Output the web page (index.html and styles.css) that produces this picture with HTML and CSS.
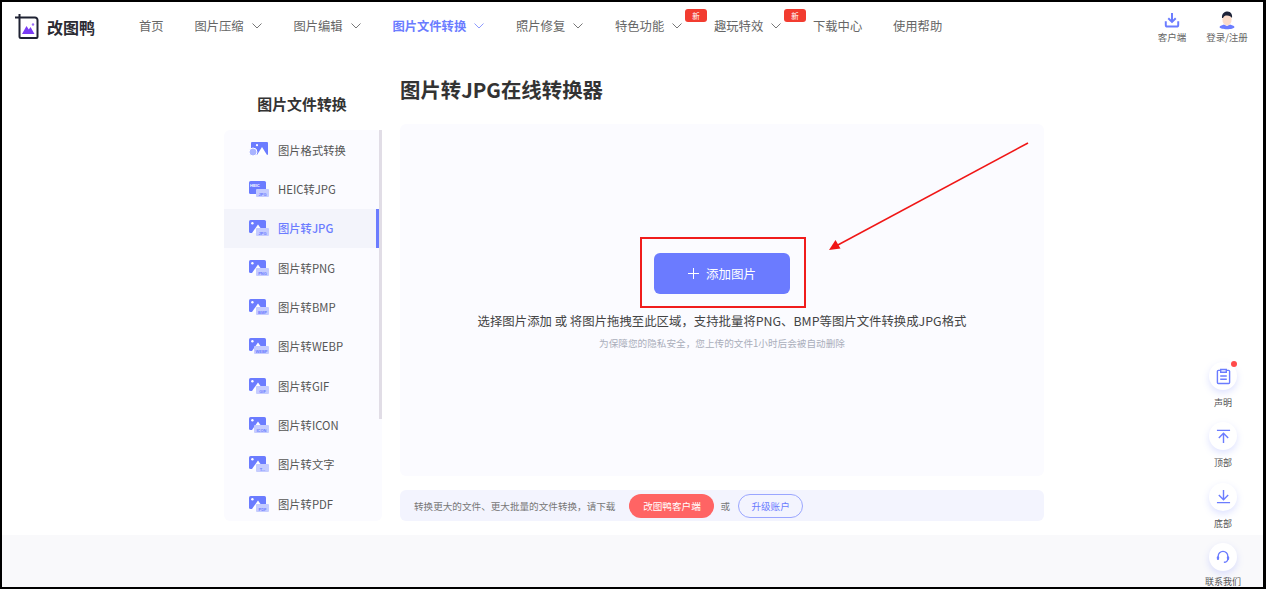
FILE: index.html
```html
<!DOCTYPE html>
<html lang="zh-CN">
<head>
<meta charset="utf-8">
<title>图片转JPG在线转换器</title>
<link rel="stylesheet" href="styles.css">
</head>
<body>
<svg class="defs" width="0" height="0" aria-hidden="true">
  <symbol id="pic" viewBox="0 0 20 16">
    <rect x="0" y="0" width="17" height="13" rx="1.6" fill="#6b7cff"/>
    <circle cx="3.4" cy="3.2" r="1.2" fill="#fff"/>
    <path d="M3 13 L9 4.5 L15 13Z" fill="#fff"/>
  </symbol>
</svg>
<div class="frame">
  <header class="top">
    <a class="logo">
      <svg class="logo-icon" viewBox="0 0 26 26" width="26" height="26">
        <path d="M1 3.5H21a2.5 2.5 0 0 1 2.500 2.500V23a1 1 0 0 1-1 1H7a1.500 1.500 0 0 1-1.500-1.500V0" fill="none" stroke="#1f2233" stroke-width="2"/>
        <path d="M8 20 L12.500 12 L14.800 15.500 L16.500 13 L20.500 20Z" fill="#7a3cf5"/>
        <circle cx="19" cy="10.500" r="1.200" fill="#9a6cf8"/>
      </svg>
      <span class="logo-text">改图鸭</span>
    </a>
    <nav class="nav">
      <a class="nav-item">首页</a>
      <a class="nav-item has-sub">图片压缩<svg class="chev" viewBox="0 0 10 6"><path d="M.5.5 5 5 9.500.5"/></svg></a>
      <a class="nav-item has-sub">图片编辑<svg class="chev" viewBox="0 0 10 6"><path d="M.5.5 5 5 9.500.5"/></svg></a>
      <a class="nav-item has-sub active">图片文件转换<svg class="chev" viewBox="0 0 10 6"><path d="M.5.5 5 5 9.500.5"/></svg></a>
      <a class="nav-item has-sub">照片修复<svg class="chev" viewBox="0 0 10 6"><path d="M.5.5 5 5 9.500.5"/></svg></a>
      <a class="nav-item has-sub">特色功能<svg class="chev" viewBox="0 0 10 6"><path d="M.5.5 5 5 9.500.5"/></svg><span class="new">新</span></a>
      <a class="nav-item has-sub">趣玩特效<svg class="chev" viewBox="0 0 10 6"><path d="M.5.5 5 5 9.500.5"/></svg><span class="new">新</span></a>
      <a class="nav-item">下载中心</a>
      <a class="nav-item">使用帮助</a>
    </nav>
    <div class="top-right">
      <a class="top-link">
        <svg viewBox="0 0 18 18" width="16" height="16"><path d="M9 1V11M4.800 7 9 11.200 13.200 7" fill="none" stroke="#6b7cff" stroke-width="2.200"/><path d="M2 10.500V14.500a1.800 1.800 0 0 0 1.800 1.800H14.200a1.800 1.800 0 0 0 1.800-1.800V10.500" fill="none" stroke="#6b7cff" stroke-width="2.200"/></svg>
        <span>客户端</span>
      </a>
      <a class="top-link login">
        <svg viewBox="0 0 20 20" width="20" height="20"><path d="M2.500 16C3 19 17 19 17.500 16 17 14.500 14.500 14 13 13.500L10 15 7 13.500C5.500 14 3 14.500 2.500 16Z" fill="#6b7cff"/><ellipse cx="10" cy="8.500" rx="4.600" ry="6" fill="#fcdcca"/><path d="M5 7C4.500 2 8 .5 10.500.5 14 .5 15.500 3.500 15 7 14 5.500 12.500 4.500 10 4.500 8 4.500 7 5 6 7Z" fill="#1d2338"/></svg>
        <span>登录/注册</span>
      </a>
    </div>
  </header>

  <div class="content">
    <aside class="side">
      <h2 class="side-title">图片文件转换</h2>
      <ul class="side-list">
        <li class="side-item">
          <svg class="ic" viewBox="0 0 20 16"><rect x="2" y="0" width="17" height="13" rx="1" fill="#6b7cff"/><circle cx="8" cy="3.200" r="1.100" fill="#fff"/><path d="M8 13 L13 5 L18 13Z" fill="#fff"/><circle cx="4" cy="10" r="4" fill="#a9b3ff" stroke="#fff"/></svg>
          <span>图片格式转换</span>
        </li>
        <li class="side-item">
          <svg class="ic" viewBox="0 0 20 16"><rect x="0" y="0" width="17" height="13" rx="1.600" fill="#6b7cff"/><text class="ic-head" x="1" y="6">HEIC</text><rect x="7" y="8" width="13" height="8" rx="1" fill="#c5ccff"/><text class="ic-t" x="13.500" y="14.500">JPG</text></svg>
          <span>HEIC转JPG</span>
        </li>
        <li class="side-item on">
          <svg class="ic" viewBox="0 0 20 16"><use href="#pic"/><rect x="7" y="8" width="13" height="8" rx="1" fill="#c5ccff"/><text class="ic-t" x="13.500" y="14.500">JPG</text></svg>
          <span>图片转JPG</span>
        </li>
        <li class="side-item">
          <svg class="ic" viewBox="0 0 20 16"><use href="#pic"/><rect x="7" y="8" width="13" height="8" rx="1" fill="#c5ccff"/><text class="ic-t" x="13.500" y="14.500">PNG</text></svg>
          <span>图片转PNG</span>
        </li>
        <li class="side-item">
          <svg class="ic" viewBox="0 0 20 16"><use href="#pic"/><rect x="7" y="8" width="13" height="8" rx="1" fill="#c5ccff"/><text class="ic-t" x="13.500" y="14.500">BMP</text></svg>
          <span>图片转BMP</span>
        </li>
        <li class="side-item">
          <svg class="ic" viewBox="0 0 20 16"><use href="#pic"/><rect x="5" y="8" width="15" height="8" rx="1" fill="#c5ccff"/><text class="ic-t" x="12.500" y="14.500">WEBP</text></svg>
          <span>图片转WEBP</span>
        </li>
        <li class="side-item">
          <svg class="ic" viewBox="0 0 20 16"><use href="#pic"/><rect x="7" y="8" width="13" height="8" rx="1" fill="#c5ccff"/><text class="ic-t" x="13.500" y="14.500">GIF</text></svg>
          <span>图片转GIF</span>
        </li>
        <li class="side-item">
          <svg class="ic" viewBox="0 0 20 16"><use href="#pic"/><rect x="5" y="8" width="15" height="8" rx="1" fill="#c5ccff"/><text class="ic-t" x="12.500" y="14.500">ICON</text></svg>
          <span>图片转ICON</span>
        </li>
        <li class="side-item">
          <svg class="ic" viewBox="0 0 20 16"><use href="#pic"/><rect x="7" y="8" width="13" height="8" rx="1" fill="#c5ccff"/><text class="ic-t" x="13.500" y="14.500">T...</text></svg>
          <span>图片转文字</span>
        </li>
        <li class="side-item">
          <svg class="ic" viewBox="0 0 20 16"><use href="#pic"/><rect x="7" y="8" width="13" height="8" rx="1" fill="#c5ccff"/><text class="ic-t" x="13.500" y="14.500">PDF</text></svg>
          <span>图片转PDF</span>
        </li>
      </ul>
      <div class="side-scroll"></div>
    </aside>

    <main class="main">
      <h1 class="title">图片转JPG在线转换器</h1>
      <section class="upload">
        <button class="add"><svg class="plus" viewBox="0 0 11 11"><path d="M5.500 0V11M0 5.500H11"/></svg>添加图片</button>
        <p class="hint">选择图片添加 或 将图片拖拽至此区域&#xFF0C;支持批量将PNG、BMP等图片文件转换成JPG格式</p>
        <p class="sub">为保障您的隐私安全&#xFF0C;您上传的文件1小时后会被自动删除</p>
        <div class="mark"></div>
        <svg class="arrow" viewBox="0 0 204 110" width="204" height="110"><path d="M202 1 10 104" stroke="#f01616" stroke-width="1.500" fill="none"/><path d="M3 108 9.500 98 14.500 106.500Z" fill="#f01616"/></svg>
      </section>
      <div class="promo">
        <span>转换更大的文件、更大批量的文件转换&#xFF0C;请下载</span>
        <a class="btn-client">改图鸭客户端</a>
        <span class="or">或</span>
        <a class="btn-up">升级账户</a>
      </div>
    </main>
  </div>
  <footer class="foot"></footer>

  <div class="float">
    <a class="f-item">
      <i class="f-circle dot"><svg viewBox="0 0 16 18" width="15" height="17"><path d="M5 2.500H2.500a1 1 0 0 0-1 1V15.500a1 1 0 0 0 1 1H13.500a1 1 0 0 0 1-1V3.500a1 1 0 0 0-1-1H11M5 1.500H11V4.500H5ZM4.500 8.500H11.500M4.500 12H11.500" fill="none" stroke="#6b7cff" stroke-width="1.500"/></svg></i>
      <span>声明</span>
    </a>
    <a class="f-item">
      <i class="f-circle"><svg viewBox="0 0 16 16" width="15" height="15"><path d="M1 1.500H15M8 15V5M3 9.500 8 4.500 13 9.500" fill="none" stroke="#6b7cff" stroke-width="1.500"/></svg></i>
      <span>顶部</span>
    </a>
    <a class="f-item">
      <i class="f-circle"><svg viewBox="0 0 16 16" width="15" height="15"><path d="M1 14.500H15M8 1V11M3 6.500 8 11.500 13 6.500" fill="none" stroke="#6b7cff" stroke-width="1.500"/></svg></i>
      <span>底部</span>
    </a>
    <a class="f-item">
      <i class="f-circle"><svg viewBox="0 0 16 16" width="14" height="14"><path d="M2.500 10V7a5.500 5.500 0 0 1 11 0V10M13.500 10C13.500 12.500 11.500 14 9 14" fill="none" stroke="#6b7cff" stroke-width="1.500"/><rect x="1" y="7" width="2.500" height="4.500" rx="1.200" fill="#6b7cff"/><rect x="12.500" y="7" width="2.500" height="4.500" rx="1.200" fill="#6b7cff"/></svg></i>
      <span>联系我们</span>
    </a>
  </div>
</div>
</body>
</html>
```
FILE: styles.css
```css
* { box-sizing: border-box; }
html, body { margin: 0; padding: 0; height: 100%; overflow: hidden; background: #000; }
body { font-family: "Noto Sans CJK SC", "Noto Sans", sans-serif; color: #333; }
.defs { position: absolute; }
a { color: inherit; text-decoration: none; }
ul { list-style: none; margin: 0; padding: 0; }
p, h1, h2 { margin: 0; }

.frame {
  position: relative;
  width: 1266px;
  height: 589px;
  border: solid #000;
  border-width: 2px 3px 2px 2px;
  background: #fff;
  display: flex;
  flex-direction: column;
  overflow: hidden;
}

/* header */
.top { height: 50px; display: flex; align-items: center; flex: none; }
.logo { display: flex; align-items: center; margin-left: 12px; width: 125px; }
.logo-icon { flex: none; }
.logo-text { margin-left: 7px; font-size: 16px; font-weight: 700; letter-spacing: 0; color: #2b2b33; }
.nav { display: flex; gap: 30.800px; font-size: 12.300px; color: #666; margin-top: -2px; }
.nav-item { position: relative; display: flex; align-items: center; height: 20px; white-space: nowrap; }
.nav-item.active { color: #6b7cff; font-weight: 700; }
.chev { width: 10px; height: 6px; margin-left: 8px; margin-right: 1px; fill: none; stroke: #777; stroke-width: 1; }
.active .chev { stroke: #8d9aff; }
.new {
  position: absolute;
  left: 70px;
  top: -7px;
  width: 22px;
  height: 13px;
  border-radius: 3px;
  background: #f23c30;
  color: #fff;
  font-size: 7.500px;
  line-height: 13px;
  text-align: center;
}
.top-right { margin-left: auto; display: flex; margin-right: 8px; }
.top-link { display: flex; flex-direction: column; align-items: center; justify-content: flex-end; height: 32px; width: 50px; font-size: 9.500px; color: #666; line-height: 12px; }
.top-link svg { margin-bottom: 3px; flex: none; }
.top-link.login { width: 56px; margin-left: 2px; }
.top-link.login svg { margin-bottom: 0; }

/* content */
.content { flex: none; display: flex; padding: 24px 0 14px 222px; gap: 18px; height: 483px; }
.side { position: relative; width: 158px; display: flex; flex-direction: column; }
.side-title { font-size: 14.900px; font-weight: 700; line-height: 24px; margin: 16px 0 14px; text-align: center; color: #333; padding-right: 2px; }
.side-list { height: 391px; overflow: hidden; background: #fbfbff; border-radius: 6px; padding-right: 3px; }
.side-item { height: 39.330px; display: flex; align-items: center; padding-left: 25px; font-size: 11.300px; color: #555; position: relative; }
.side-item .ic { width: 20px; height: 16px; flex: none; margin-right: 9px; }
.side-item.on { background: #f3f4fb; color: #6b7cff; font-weight: 500; }
.side-item.on::after { content: ""; position: absolute; right: 0; top: 0; bottom: 0; width: 3px; background: #6b7cff; }
.ic-t { font: 700 4px "Liberation Sans", sans-serif; fill: #6b7cff; text-anchor: middle; }
.ic-head { font: 700 4px "Liberation Sans", sans-serif; fill: #fff; }
.side-scroll { position: absolute; right: 0; top: 54px; width: 3px; height: 289px; background: #e1dde6; }

.main { width: 644px; display: flex; flex-direction: column; }
.title { font-size: 20.400px; font-weight: 700; line-height: 26px; margin-bottom: 22px; color: #333; }
.upload {
  position: relative;
  height: 352px;
  background: #fbfbff;
  border-radius: 6px;
  display: flex;
  flex-direction: column;
  align-items: center;
  padding-top: 129px;
}
.add {
  width: 136px;
  height: 41px;
  border: 0;
  border-radius: 6px;
  background: #6b7bff;
  color: #fff;
  font: 400 12.500px "Noto Sans CJK SC", sans-serif;
  display: flex;
  align-items: center;
  justify-content: center;
}
.plus { width: 11px; height: 11px; margin-right: 7px; fill: none; stroke: #fff; stroke-width: 1; }
.hint { margin-top: 17px; font-size: 12.400px; line-height: 20px; color: #444; white-space: nowrap; }
.sub { margin-top: 5px; font-size: 9.650px; line-height: 14px; color: #aaaebb; }
.mark { position: absolute; left: 240px; top: 113px; width: 166px; height: 71px; border: 2px solid #f01c1c; }
.arrow { position: absolute; left: 426px; top: 18px; }

.promo {
  margin-top: 14px;
  height: 31px;
  border-radius: 6px;
  background: #f3f4fe;
  display: flex;
  align-items: center;
  padding-left: 14px;
  font-size: 9.600px;
  color: #777;
}
.btn-client {
  margin-left: 14px;
  width: 85px;
  height: 24px;
  border-radius: 12px;
  background: #ff6464;
  color: #fff;
  line-height: 24px;
  text-align: center;
}
.or { margin-left: 6px; }
.btn-up {
  margin-left: 8px;
  width: 65px;
  height: 24px;
  border-radius: 12px;
  border: 1px solid #9aa6ff;
  color: #6b7cff;
  line-height: 22px;
  text-align: center;
}

.foot { flex: 1; background: #f9f9fb; }

/* floating rail */
.float { position: absolute; right: 20px; top: 360px; width: 40px; display: flex; flex-direction: column; align-items: center; }
.f-item { display: flex; flex-direction: column; align-items: center; font-size: 9px; line-height: 12px; color: #555; height: 60.300px; white-space: nowrap; }
.f-circle {
  position: relative;
  width: 28px;
  height: 28px;
  border-radius: 50%;
  background: #fff;
  box-shadow: 0 3px 7px rgba(107, 124, 255, .22);
  display: flex;
  align-items: center;
  justify-content: center;
  margin-bottom: 7px;
}
.f-item:last-child .f-circle { margin-bottom: 5px; }
.f-circle.dot::after { content: ""; position: absolute; right: 0; top: -1px; width: 6px; height: 6px; border-radius: 50%; background: #ff4a4a; }
```
